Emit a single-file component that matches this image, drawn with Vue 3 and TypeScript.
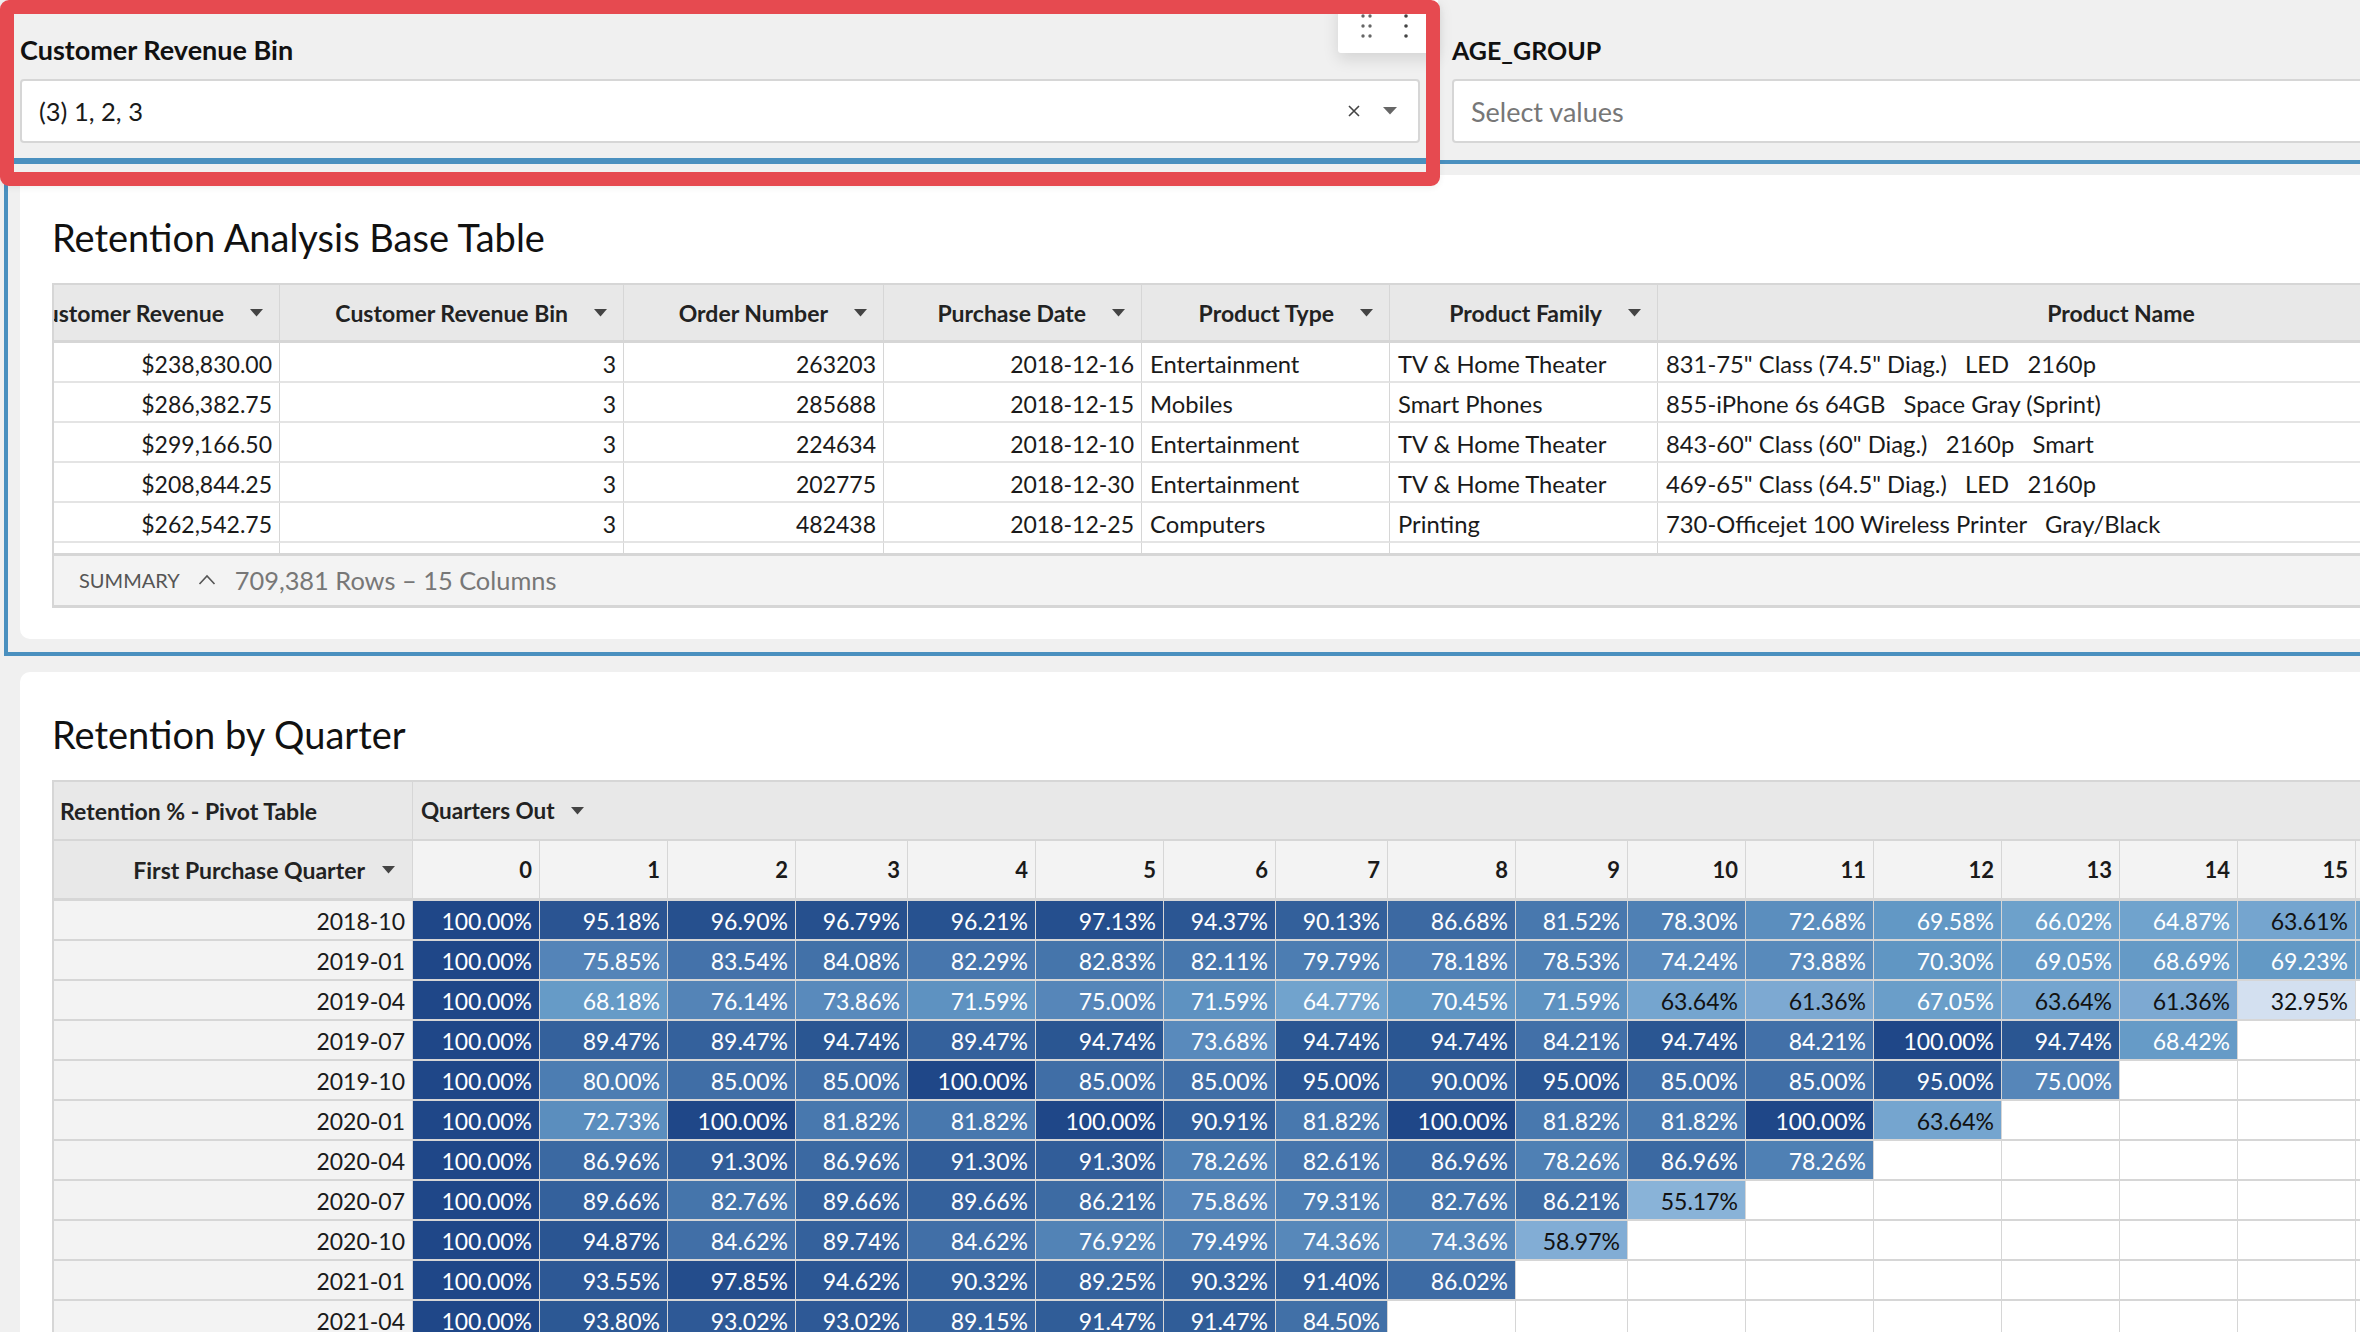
<template>
  <div class="page">
    <div class="filter-bar">
      <div class="filter filter-active">
        <div class="filter-label">Customer Revenue Bin</div>
        <div class="filter-input">
          <span class="filter-value">(3) 1, 2, 3</span>
          <svg class="clear-icon" width="14" height="14" viewBox="0 0 14 14">
            <path d="M2 2 L12 12 M12 2 L2 12" stroke="#444" stroke-width="1.6" fill="none" />
          </svg>
          <svg class="select-caret" width="14" height="8" viewBox="0 0 14 8">
            <path d="M0 0 H14 L7 7.5 Z" fill="#666" />
          </svg>
        </div>
      </div>
      <div class="filter filter-second">
        <div class="filter-label">AGE_GROUP</div>
        <div class="filter-input">
          <span class="filter-placeholder">Select values</span>
        </div>
      </div>
    </div>

    <div class="selected-frame">
      <section class="card base-card">
        <h2 class="card-title">Retention Analysis Base Table</h2>
        <div class="base-table">
          <div class="base-head"><span>Customer Revenue</span><svg class="caret" width="13" height="8" viewBox="0 0 13 8"><path d="M0 0 H13 L6.5 7.5 Z" /></svg></div>
          <div v-for="h in baseHeaders" :key="h" class="base-head"><span>{{ h }}</span><svg class="caret" width="13" height="8" viewBox="0 0 13 8"><path d="M0 0 H13 L6.5 7.5 Z" /></svg></div>
          <div class="base-head head-center"><span>Product Name</span></div>

          <template v-for="row in baseRows" :key="row.order">
            <div class="base-cell num">{{ row.revenue }}</div>
            <div class="base-cell num">3</div>
            <div class="base-cell num">{{ row.order }}</div>
            <div class="base-cell num">{{ row.date }}</div>
            <div class="base-cell">{{ row.type }}</div>
            <div class="base-cell">{{ row.family }}</div>
            <div class="base-cell">{{ row.name }}</div>
          </template>
          <div v-for="n in 7" :key="n" class="base-cell stub"></div>
        </div>
        <div class="summary">
          <span class="summary-label">SUMMARY</span>
          <svg class="summary-chevron" width="18" height="11" viewBox="0 0 18 11">
            <path d="M1.5 10 L9 2 L16.5 10" stroke="#555" stroke-width="1.6" fill="none" />
          </svg>
          <span class="summary-count">709,381 Rows – 15 Columns</span>
        </div>
      </section>
    </div>

    <section class="card pivot-card">
      <h2 class="card-title">Retention by Quarter</h2>
      <div class="pivot">
        <div class="pivot-title">Retention % - Pivot Table</div>
        <div class="pivot-quarters">
          <span>Quarters Out</span>
          <svg class="caret" width="13" height="8" viewBox="0 0 13 8"><path d="M0 0 H13 L6.5 7.5 Z" /></svg>
        </div>
        <div class="pivot-first">
          <span>First Purchase Quarter</span>
          <svg class="caret" width="13" height="8" viewBox="0 0 13 8"><path d="M0 0 H13 L6.5 7.5 Z" /></svg>
        </div>
        <div v-for="n in 17" :key="n" class="pivot-num">{{ n < 17 ? n - 1 : '' }}</div>

        <template v-for="row in pivotRows" :key="row.quarter">
          <div class="pivot-quarter">{{ row.quarter }}</div>
          <div
            v-for="(v, i) in cellsFor(row.values)"
            :key="i"
            class="pivot-cell"
            :class="{ 'on-light': v !== null && v < 64 }"
            :style="v !== null ? { background: colorFor(v) } : undefined"
          >{{ v !== null && i < 16 ? v.toFixed(2) + '%' : '' }}</div>
        </template>
      </div>
    </section>

    <div class="cell-toolbar">
      <svg width="16" height="30" viewBox="0 0 16 30">
        <g fill="#666">
          <circle cx="3" cy="4" r="1.7" /><circle cx="10" cy="4" r="1.7" />
          <circle cx="3" cy="14" r="1.7" /><circle cx="10" cy="14" r="1.7" />
          <circle cx="3" cy="24" r="1.7" /><circle cx="10" cy="24" r="1.7" />
        </g>
      </svg>
      <svg width="6" height="30" viewBox="0 0 6 30">
        <g fill="#444">
          <circle cx="3" cy="4" r="1.8" /><circle cx="3" cy="14" r="1.8" /><circle cx="3" cy="24" r="1.8" />
        </g>
      </svg>
    </div>
    <div class="highlight"></div>
  </div>
</template>

<script setup lang="ts">
const baseHeaders = ['Customer Revenue Bin', 'Order Number', 'Purchase Date', 'Product Type', 'Product Family']

const baseRows = [
  { revenue: '$238,830.00', order: 263203, date: '2018-12-16', type: 'Entertainment', family: 'TV & Home Theater', name: '831-75" Class (74.5" Diag.)   LED   2160p' },
  { revenue: '$286,382.75', order: 285688, date: '2018-12-15', type: 'Mobiles', family: 'Smart Phones', name: '855-iPhone 6s 64GB   Space Gray (Sprint)' },
  { revenue: '$299,166.50', order: 224634, date: '2018-12-10', type: 'Entertainment', family: 'TV & Home Theater', name: '843-60" Class (60" Diag.)   2160p   Smart' },
  { revenue: '$208,844.25', order: 202775, date: '2018-12-30', type: 'Entertainment', family: 'TV & Home Theater', name: '469-65" Class (64.5" Diag.)   LED   2160p' },
  { revenue: '$262,542.75', order: 482438, date: '2018-12-25', type: 'Computers', family: 'Printing', name: '730-Officejet 100 Wireless Printer   Gray/Black' },
]

const pivotRows = [
  { quarter: '2018-10', values: [100, 95.18, 96.9, 96.79, 96.21, 97.13, 94.37, 90.13, 86.68, 81.52, 78.3, 72.68, 69.58, 66.02, 64.87, 63.61, 66] },
  { quarter: '2019-01', values: [100, 75.85, 83.54, 84.08, 82.29, 82.83, 82.11, 79.79, 78.18, 78.53, 74.24, 73.88, 70.3, 69.05, 68.69, 69.23, 66] },
  { quarter: '2019-04', values: [100, 68.18, 76.14, 73.86, 71.59, 75, 71.59, 64.77, 70.45, 71.59, 63.64, 61.36, 67.05, 63.64, 61.36, 32.95] },
  { quarter: '2019-07', values: [100, 89.47, 89.47, 94.74, 89.47, 94.74, 73.68, 94.74, 94.74, 84.21, 94.74, 84.21, 100, 94.74, 68.42] },
  { quarter: '2019-10', values: [100, 80, 85, 85, 100, 85, 85, 95, 90, 95, 85, 85, 95, 75] },
  { quarter: '2020-01', values: [100, 72.73, 100, 81.82, 81.82, 100, 90.91, 81.82, 100, 81.82, 81.82, 100, 63.64] },
  { quarter: '2020-04', values: [100, 86.96, 91.3, 86.96, 91.3, 91.3, 78.26, 82.61, 86.96, 78.26, 86.96, 78.26] },
  { quarter: '2020-07', values: [100, 89.66, 82.76, 89.66, 89.66, 86.21, 75.86, 79.31, 82.76, 86.21, 55.17] },
  { quarter: '2020-10', values: [100, 94.87, 84.62, 89.74, 84.62, 76.92, 79.49, 74.36, 74.36, 58.97] },
  { quarter: '2021-01', values: [100, 93.55, 97.85, 94.62, 90.32, 89.25, 90.32, 91.4, 86.02] },
  { quarter: '2021-04', values: [100, 93.8, 93.02, 93.02, 89.15, 91.47, 91.47, 84.5] },
]

// pads a row out to the 17 columns of the pivot
function cellsFor(values: number[]): (number | null)[] {
  const cells: (number | null)[] = [...values]
  while (cells.length < 17) cells.push(null)
  return cells
}

const stops: [number, number, number, number][] = [
  [33, 211, 224, 240],
  [55, 137, 179, 216],
  [61, 126, 170, 211],
  [65, 112, 163, 205],
  [70, 97, 151, 196],
  [75, 86, 134, 185],
  [80, 76, 125, 178],
  [85, 64, 110, 166],
  [90, 51, 96, 155],
  [95, 42, 85, 146],
  [100, 31, 71, 136],
]

function colorFor(v: number): string {
  for (let i = 1; i < stops.length; i++) {
    if (v <= stops[i][0]) {
      const a = stops[i - 1]
      const b = stops[i]
      const t = (v - a[0]) / (b[0] - a[0])
      const mix = (k: number) => Math.round(a[k] + (b[k] - a[k]) * t)
      return `rgb(${mix(1)}, ${mix(2)}, ${mix(3)})`
    }
  }
  return 'rgb(31, 71, 136)'
}
</script>

<style>
html,
body {
  margin: 0;
  background: #f0f0f0;
}
</style>

<style scoped>
.page {
  position: relative;
  width: 2360px;
  height: 1332px;
  overflow: hidden;
  background: #f0f0f0;
  font-family: Lato, "Noto Sans", sans-serif;
  color: #1a1a1a;
}

.filter-bar {
  display: flex;
  height: 160px;
}

.filter {
  box-sizing: border-box;
  padding-top: 33px;
}

.filter-active {
  width: 1432px;
  flex: none;
  padding-left: 20px;
  padding-right: 12px;
  border-bottom: 2px solid #4a90bf;
}

.filter-second {
  flex: none;
  width: 1000px;
  padding-left: 20px;
}

.filter-label {
  height: 34px;
  line-height: 34px;
  font-size: 27px;
  font-weight: 700;
  color: #111;
  margin-bottom: 12px;
}

.filter-second .filter-label {
  font-size: 25px;
}

.filter-input {
  box-sizing: border-box;
  height: 64px;
  display: flex;
  align-items: center;
  padding: 0 17px;
  background: #fff;
  border: 2px solid #d6d6d6;
  border-radius: 4px;
}

.filter-value {
  flex: 1;
  font-size: 25.5px;
}

.filter-placeholder {
  font-size: 27px;
  color: #777;
}

.clear-icon {
  margin-right: 22px;
}

.select-caret {
  margin-right: 4px;
}

.selected-frame {
  box-sizing: border-box;
  margin-left: 4px;
  height: 496px;
  padding: 11px 0 13px 12px;
  border: 4px solid #4a90bf;
  border-right: none;
}

.card {
  background: #fff;
  border-radius: 10px 0 0 10px;
}

.base-card {
  box-sizing: border-box;
  height: 100%;
  padding: 0 0 0 32px;
}

.card-title {
  margin: 0;
  font-size: 38px;
  font-weight: 400;
  color: #111;
}

.base-card .card-title {
  padding-top: 39px;
  height: 69px;
  line-height: 46px;
}

.base-table {
  display: grid;
  grid-template-columns: 226px 344px 260px 258px 248px 268px 926px;
  grid-template-rows: 58px repeat(5, 40px) 10px;
  font-size: 23px;
  border-top: 2px solid #d6d6d6;
  border-left: 2px solid #d6d6d6;
  box-sizing: border-box;
  width: 2600px;
}

.base-head {
  box-sizing: border-box;
  display: flex;
  align-items: center;
  justify-content: flex-end;
  gap: 26px;
  padding-right: 16px;
  overflow: hidden;
  white-space: nowrap;
  background: #e8e8e8;
  font-weight: 700;
  font-size: 23px;
  color: #222;
  border-right: 1px solid #d6d6d6;
  border-bottom: 3px solid #d6d6d6;
}

.head-center {
  justify-content: center;
  padding-right: 0;
  border-right: none;
}

.caret {
  flex: none;
  fill: #444;
}

.base-cell {
  box-sizing: border-box;
  display: flex;
  align-items: center;
  padding: 4px 8px 0;
  font-size: 23.8px;
  white-space: pre;
  overflow: hidden;
  border-right: 1px solid #d6d6d6;
  border-bottom: 2px solid #e4e4e4;
  background: #fff;
}

.base-cell.num {
  justify-content: flex-end;
  padding: 4px 7px 0;
  font-size: 23px;
}

.base-cell.stub {
  border-bottom: none;
}

.summary {
  box-sizing: border-box;
  height: 55px;
  display: flex;
  align-items: center;
  padding: 0 0 2px 25px;
  background: #f3f3f3;
  border-top: 3px solid #d6d6d6;
  border-bottom: 3px solid #d6d6d6;
  border-left: 2px solid #d6d6d6;
}

.summary-label {
  font-size: 20px;
  color: #555;
}

.summary-chevron {
  margin-left: 18px;
}

.summary-count {
  margin-left: 19px;
  font-size: 25.4px;
  color: #777;
}

.pivot-card {
  margin: 16px 0 0 20px;
  height: 700px;
  padding: 0 0 0 32px;
  border-bottom-left-radius: 0;
}

.pivot-card .card-title {
  padding-top: 39px;
  height: 69px;
  line-height: 46px;
}

.pivot {
  display: grid;
  grid-template-columns: 359px 127px 128px 128px 112px 128px 128px 112px 112px 128px 112px 118px 128px 128px 118px 118px 118px 118px;
  grid-template-rows: 59px 60px repeat(11, 40px);
  width: 2440px;
  box-sizing: border-box;
  border-top: 2px solid #d6d6d6;
  border-left: 2px solid #d6d6d6;
  font-size: 23px;
}

.pivot-title,
.pivot-quarters,
.pivot-first {
  box-sizing: border-box;
  display: flex;
  align-items: center;
  background: #e8e8e8;
  font-weight: 700;
  font-size: 23px;
  color: #222;
  white-space: nowrap;
}

.pivot-title {
  padding-left: 6px;
  border-right: 1px solid #d6d6d6;
  border-bottom: 2px solid #d6d6d6;
}

.pivot-quarters {
  grid-column: 2 / -1;
  padding-left: 8px;
  gap: 16px;
  border-bottom: 2px solid #d6d6d6;
}

.pivot-quarters span {
  font-size: 22.5px;
}

.pivot-first {
  justify-content: flex-end;
  gap: 17px;
  padding-right: 17px;
  border-right: 1px solid #d6d6d6;
  border-bottom: 3px solid #d6d6d6;
}

.pivot-num {
  box-sizing: border-box;
  display: flex;
  align-items: center;
  justify-content: flex-end;
  padding-right: 7px;
  background: #f3f3f3;
  font-weight: 700;
  font-size: 22px;
  border-right: 1px solid #d6d6d6;
  border-bottom: 3px solid #d6d6d6;
}

.pivot-quarter,
.pivot-cell {
  box-sizing: border-box;
  display: flex;
  align-items: center;
  justify-content: flex-end;
  padding: 1px 7px 0 0;
  white-space: nowrap;
  overflow: hidden;
  border-bottom: 2px solid #d6d6d6;
  border-right: 1px solid #d6d6d6;
}

.pivot-quarter {
  background: #f3f3f3;
}

.pivot-cell {
  color: #fff;
}

.pivot-cell.on-light {
  color: #111;
}

.cell-toolbar {
  position: absolute;
  left: 1338px;
  top: 0;
  width: 100px;
  height: 53px;
  box-sizing: border-box;
  padding: 12px 0 0 22px;
  display: flex;
  gap: 27px;
  background: #fff;
  border-radius: 0 0 0 3px;
  box-shadow: 0 6px 16px rgba(0, 0, 0, 0.12);
}

.highlight {
  position: absolute;
  left: 0;
  top: 0;
  width: 1440px;
  height: 186px;
  box-sizing: border-box;
  border: 14px solid #e64a50;
  border-radius: 9px;
  box-shadow: 0 2px 6px rgba(0, 0, 0, 0.06);
}
</style>
